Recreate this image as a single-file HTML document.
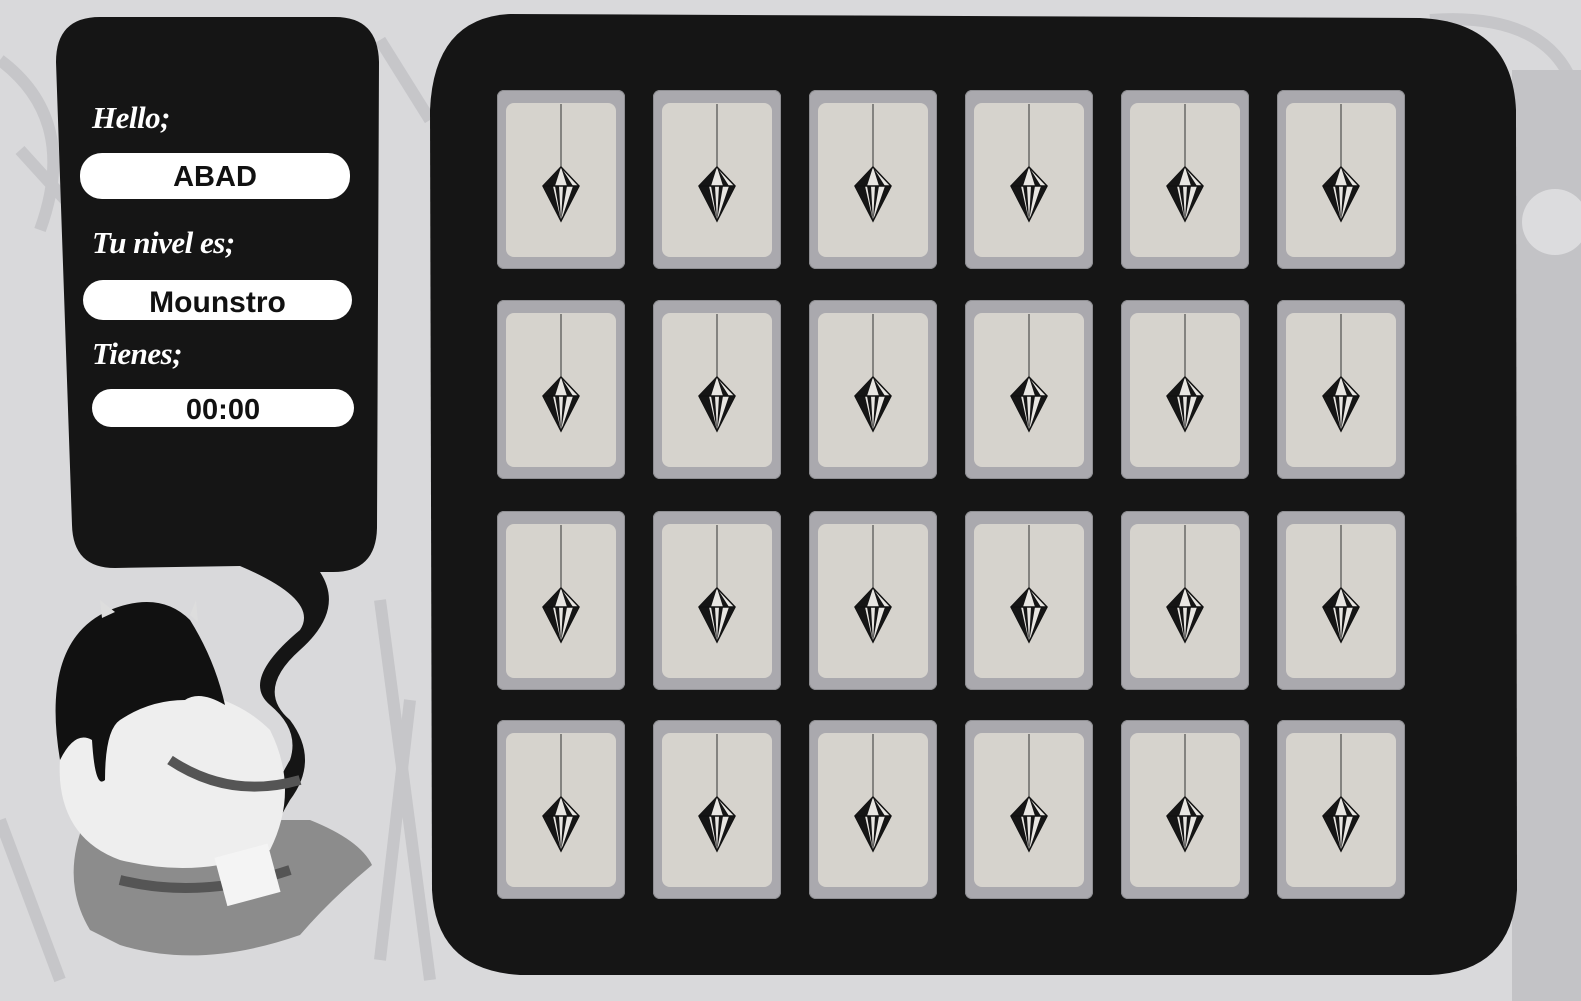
<!DOCTYPE html>
<html><head><meta charset="utf-8"><style>
html,body{margin:0;padding:0}
body{width:1581px;height:1001px;position:relative;overflow:hidden;background:#d9d9db;font-family:"Liberation Sans",sans-serif}
.bg{position:absolute;left:0;top:0}
.lbl{position:absolute;color:#fff;font-family:"Liberation Serif",serif;font-style:italic;font-weight:bold;font-size:31px;letter-spacing:-0.5px}
.bar{position:absolute;background:#fff;border-radius:22px;color:#111;font-weight:bold;text-align:center;font-size:29px}
.card{position:absolute;width:128px;height:179px;background:#aaa9ae;border-radius:7px;box-shadow:inset 0 0 0 1px #8e8e92}
.card .in{position:absolute;left:9px;top:13px;right:9px;bottom:12px;background:#d6d3cd;border-radius:8px}
.card svg{position:absolute;left:0;top:0}
</style></head><body>
<svg class="bg" width="1581" height="1001">
<g fill="none" stroke="#c6c6c9" stroke-width="12">
<path d="M0 60 Q80 120 40 230"/><path d="M20 150 L120 260"/><path d="M380 40 L430 120"/>
<path d="M1430 20 Q1570 10 1581 120"/>
<path d="M380 600 L430 980"/><path d="M410 700 L380 960"/><path d="M0 820 L60 980"/>
</g>
<rect x="1512" y="70" width="69" height="931" fill="#c3c3c6"/>
<circle cx="1555" cy="222" r="33" fill="#dcdcde"/>
<!-- board -->
<path d="M510 14 L1420 18 Q1512 22 1516 110 L1517 890 Q1512 972 1430 975 L520 975 Q436 970 432 890 L430 110 Q434 18 510 14Z" fill="#151515"/>
<!-- bubble -->
<path d="M100 17 L335 17 Q378 17 379 62 L377 528 Q376 572 333 572 L320 572 Q345 610 300 650 Q255 690 290 720 Q320 760 290 800 Q272 830 272 845 Q265 800 290 760 Q300 730 270 705 Q240 680 300 630 Q320 600 240 566 L115 568 Q73 568 72 525 L56 62 Q56 17 100 17Z" fill="#151515"/>
<!-- monster -->
<path d="M90 930 Q60 880 85 820 L310 820 Q360 840 372 865 Q330 900 300 935 Q200 970 120 945Z" fill="#8c8c8c"/>
<path d="M60 780 Q55 700 120 690 Q220 680 270 730 Q300 790 270 850 Q200 880 120 860 Q65 840 60 780Z" fill="#eeeeee"/>
<path d="M60 760 Q40 640 110 610 Q160 590 190 620 Q215 660 225 705 Q200 690 185 700 Q150 700 120 720 Q105 730 105 780 Q95 790 92 740 Q75 730 60 760Z" fill="#111"/>
<path d="M102 618 L100 600 L115 612Z M190 615 L196 600 L198 622Z" fill="#ddd"/>
<path d="M170 760 Q230 800 300 780 M120 880 Q200 900 290 870" stroke="#555" stroke-width="10" fill="none"/>
<rect x="220" y="850" width="55" height="50" fill="#f4f4f4" transform="rotate(-15 247 875)"/>
</svg>

<div class="lbl" style="left:92px;top:100px">Hello;</div>
<div class="bar" style="left:80px;top:153px;width:270px;height:46px;line-height:48px">ABAD</div>
<div class="lbl" style="left:92px;top:225px">Tu nivel es;</div>
<div class="bar" style="left:83px;top:280px;width:269px;height:40px;line-height:46px;font-size:30px">Mounstro</div>
<div class="lbl" style="left:92px;top:336px">Tienes;</div>
<div class="bar" style="left:92px;top:389px;width:262px;height:38px;line-height:42px">00:00</div>

<div id="g"></div>
<script>
var xs=[497,653,809,965,1121,1277],ys=[90,300,511,720],h='';
var gem='<svg width="128" height="179"><line x1="64" y1="14" x2="64" y2="78" stroke="#333" stroke-width="1"/><path d="M64 77 L82 96 L64 131 L46 96Z" fill="#e8e6e2" stroke="#111" stroke-width="1.5"/><path d="M64 77 L52 96 L58 96Z M64 77 L70 96 L76 96Z M64 77 L46 96 L52 96Z M58 96 L64 131 L62 96Z M66 96 L64 131 L70 96Z M76 96 L82 96 L64 131Z M46 96 L56 96 L64 131Z" fill="#151515"/><line x1="46" y1="96" x2="82" y2="96" stroke="#111" stroke-width="1.5"/></svg>';
for(var r=0;r<4;r++)for(var c=0;c<6;c++)h+='<div class="card" style="left:'+xs[c]+'px;top:'+ys[r]+'px"><div class="in"></div>'+gem+'</div>';
document.getElementById('g').innerHTML=h;
</script>
</body></html>
